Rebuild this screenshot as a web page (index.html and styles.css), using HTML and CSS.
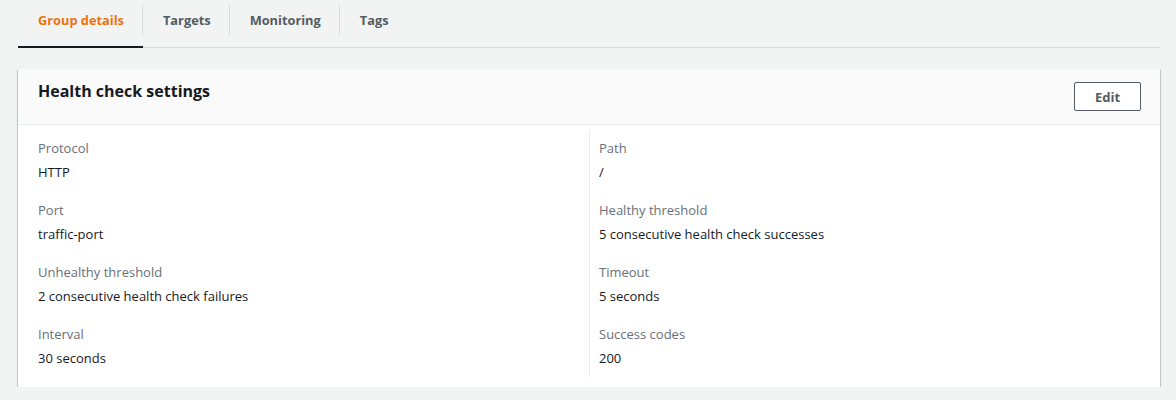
FILE: index.html
```html
<!DOCTYPE html>
<html lang="en">
<head>
<meta charset="utf-8">
<title>Health check settings</title>
<link rel="stylesheet" href="styles.css">
</head>
<body>
<div class="page">
  <nav class="tabs">
    <a class="tab active">Group details</a>
    <a class="tab">Targets</a>
    <a class="tab">Monitoring</a>
    <a class="tab last">Tags</a>
  </nav>
  <section class="card">
    <header class="card-header">
      <h2 class="card-title">Health check settings</h2>
      <button class="btn">Edit</button>
    </header>
    <div class="card-body">
      <div class="col col-left">
        <div class="field"><div class="label">Protocol</div><div class="value">HTTP</div></div>
        <div class="field"><div class="label">Port</div><div class="value">traffic-port</div></div>
        <div class="field"><div class="label">Unhealthy threshold</div><div class="value">2 consecutive health check failures</div></div>
        <div class="field"><div class="label">Interval</div><div class="value">30 seconds</div></div>
      </div>
      <div class="col col-right">
        <div class="field"><div class="label">Path</div><div class="value">/</div></div>
        <div class="field"><div class="label">Healthy threshold</div><div class="value">5 consecutive health check successes</div></div>
        <div class="field"><div class="label">Timeout</div><div class="value">5 seconds</div></div>
        <div class="field"><div class="label">Success codes</div><div class="value">200</div></div>
      </div>
    </div>
  </section>
</div>
</body>
</html>
```

FILE: styles.css
```css
html, body {
  margin: 0;
  padding: 0;
  background: #f2f3f3;
  font-family: "Open Sans", "Liberation Sans", Arial, sans-serif;
  color: #16191f;
}

.page {
  margin: 0 16px 0 18px;
}

.tabs {
  display: flex;
  height: 48px;
  border-bottom: 1px solid #d5dbdb;
  box-sizing: border-box;
}

.tab {
  position: relative;
  display: flex;
  align-items: center;
  padding: 0 19px 6px 20px;
  font-size: 12.8px;
  font-weight: 700;
  color: #545b64;
  box-sizing: border-box;
  border-bottom: 2px solid transparent;
  margin-bottom: -1px;
}

.tab::after {
  content: "";
  position: absolute;
  right: 0;
  top: 5px;
  height: 30px;
  border-right: 1px solid #d5dbdb;
}

.tab.last::after {
  display: none;
}

.tab.active {
  color: #ec7211;
  border-bottom-color: #16191f;
}

.card {
  margin-top: 21px;
  background: #ffffff;
  box-shadow: 0 1px 1px 0 rgba(0, 28, 36, 0.3), 1px 1px 1px 0 rgba(0, 28, 36, 0.15), -1px 1px 1px 0 rgba(0, 28, 36, 0.15);
}

.card-header {
  display: flex;
  justify-content: space-between;
  align-items: flex-start;
  height: 56px;
  box-sizing: border-box;
  padding: 11px 19px 0 20px;
  background: #fafafa;
  border-bottom: 1px solid #eaeded;
}

.card-title {
  margin: 0;
  font-size: 16px;
  line-height: 22px;
  font-weight: 700;
  color: #16191f;
}

.btn {
  margin-top: 2px;
  height: 29px;
  width: 67px;
  padding: 0;
  background: #ffffff;
  border: 1px solid #545b64;
  border-radius: 2px;
  font-family: inherit;
  font-size: 13px;
  font-weight: 700;
  color: #545b64;
}

.card-body {
  display: grid;
  grid-template-columns: 1fr 1fr;
  padding: 5px 0 10px;
}

.col {
  display: flex;
  flex-direction: column;
  gap: 18px;
  padding: 8px 0 9px;
}

.col-left {
  padding-left: 20px;
}

.col-right {
  padding-left: 9px;
  border-left: 1px solid #eaeded;
}

.field {
  display: flex;
  flex-direction: column;
  gap: 4px;
}

.label, .value {
  font-size: 13px;
  line-height: 20px;
}

.label {
  color: #687078;
}

.value {
  color: #16191f;
}
```
